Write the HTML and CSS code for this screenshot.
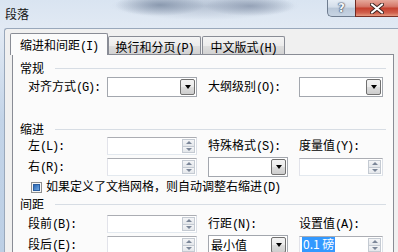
FILE: index.html
```html
<!DOCTYPE html>
<html lang="zh">
<head>
<meta charset="utf-8">
<title>段落</title>
<link rel="stylesheet" href="styles.css">
</head>
<body>
<div class="window">
  <div class="titlebar">
    <span class="title">段落</span>
    <div class="caption">
      <div class="cbtn help">?</div>
      <div class="cbtn close">
        <svg width="14" height="11" viewBox="0 0 14 11">
          <path d="M2 1.5 L12 9.5 M12 1.5 L2 9.5" stroke="#3d2420" stroke-width="4" stroke-linecap="round"/>
          <path d="M2 1.5 L12 9.5 M12 1.5 L2 9.5" stroke="#ffffff" stroke-width="2.2" stroke-linecap="round"/>
        </svg>
      </div>
    </div>
  </div>
  <div class="client">
    <div class="tabs">
      <div class="tab active">缩进和间距<span class="k">(I)</span></div>
      <div class="tab t2">换行和分页<span class="k">(P)</span></div>
      <div class="tab t3">中文版式<span class="k">(H)</span></div>
    </div>
    <div class="panel">
      <div class="heading">常规</div>
      <div class="grid g1">
        <span class="lbl">对齐方式<span class="k">(G):</span></span>
        <div class="dd"><span class="val"></span><span class="ddb"></span></div>
        <span class="lbl">大纲级别<span class="k">(O):</span></span>
        <div class="dd"><span class="val"></span><span class="ddb"></span></div>
      </div>

      <div class="heading h2">缩进</div>
      <div class="grid g2">
        <span class="lbl">左<span class="k">(L):</span></span>
        <div class="spin"><span class="val"></span><span class="sb"><i class="up"></i><i class="dn"></i></span></div>
        <span class="lbl">特殊格式<span class="k">(S):</span></span>
        <span class="lbl">度量值<span class="k">(Y):</span></span>
        <span class="lbl">右<span class="k">(R):</span></span>
        <div class="spin"><span class="val"></span><span class="sb"><i class="up"></i><i class="dn"></i></span></div>
        <div class="dd"><span class="val"></span><span class="ddb"></span></div>
        <div class="spin"><span class="val"></span><span class="sb"><i class="up"></i><i class="dn"></i></span></div>
      </div>

      <div class="check"><span class="cb"><i></i></span><span>如果定义了文档网格，则自动调整右缩进<span class="k">(D)</span></span></div>

      <div class="heading h3">间距</div>
      <div class="grid g2 g3">
        <span class="lbl">段前<span class="k">(B):</span></span>
        <div class="spin"><span class="val"></span><span class="sb"><i class="up"></i><i class="dn"></i></span></div>
        <span class="lbl">行距<span class="k">(N):</span></span>
        <span class="lbl">设置值<span class="k">(A):</span></span>
        <span class="lbl">段后<span class="k">(E):</span></span>
        <div class="spin"><span class="val"></span><span class="sb"><i class="up"></i><i class="dn"></i></span></div>
        <div class="dd"><span class="val">最小值</span><span class="ddb"></span></div>
        <div class="spin"><span class="val"><span class="sel">0.1 磅</span></span><span class="sb"><i class="up"></i><i class="dn"></i></span></div>
      </div>
    </div>
  </div>
</div>
</body>
</html>
```

FILE: styles.css
```css
html, body {
  margin: 0;
  padding: 0;
}
body {
  width: 398px;
  height: 252px;
  overflow: hidden;
  font-family: "Noto Sans CJK SC", sans-serif;
  font-size: 12px;
  line-height: 14px;
  color: #000;
  background: #f0f0f0;
}

.window {
  height: 252px;
  display: flex;
  flex-direction: column;
  background:
    radial-gradient(ellipse 45px 11px at 160px 5px, rgba(118, 134, 158, 0.75), rgba(118, 134, 158, 0) 100%),
    radial-gradient(ellipse 45px 10px at 250px 6px, rgba(128, 142, 165, 0.7), rgba(128, 142, 165, 0) 100%),
    radial-gradient(ellipse 95px 14px at 205px 6px, rgba(150, 164, 185, 0.55), rgba(150, 164, 185, 0) 100%),
    linear-gradient(to bottom, #d9e4f1, #e2eaf4 30px, #c3d4e8 120px, #bccfe5);
}

.titlebar {
  height: 28px;
  display: flex;
  align-items: flex-start;
  flex: none;
}
.title {
  margin: 7px 0 0 5px;
  color: #151515;
}
.caption {
  margin-left: auto;
  display: flex;
}
.cbtn {
  height: 17px;
  box-sizing: border-box;
  display: flex;
  align-items: center;
  justify-content: center;
}
.help {
  width: 28px;
  border: 1px solid #6e7c8f;
  border-top: 0;
  border-right: 0;
  border-radius: 0 0 0 5px;
  background: linear-gradient(to bottom, #e6edf5, #d3dde9 45%, #b9c7d8 50%, #c7d4e3);
  color: #f4f7fb;
  font-family: "DejaVu Sans", sans-serif;
  font-weight: bold;
  font-size: 12px;
  text-shadow: 0 0 1px #3a4a60, 0 0 1px #3a4a60, 0 0 2px #3a4a60;
}
.close {
  width: 43px;
  border-left: 1px solid #6e2a22;
  border-bottom: 1px solid #7a3026;
  background: linear-gradient(to bottom, #e6a89b, #d5786a 40%, #c5412f 52%, #d0604d 80%, #e59a80);
}

.client {
  flex: 1;
  margin-left: 4px;
  background: #f0f0f0;
  border-top: 1px solid #99a8bb;
  border-left: 1px solid #99a8bb;
  border-top-left-radius: 3px;
  padding: 4px 4px 0 5px;
  display: flex;
  flex-direction: column;
}

.k {
  font-family: "Liberation Mono", monospace;
  font-size: 12px;
  letter-spacing: -1.2px;
}

.tabs {
  height: 21px;
  display: flex;
  align-items: flex-end;
  flex: none;
  position: relative;
  z-index: 1;
}
.tab {
  box-sizing: border-box;
  height: 18px;
  padding-top: 3px;
  border: 1px solid #898c95;
  border-bottom: 0;
  border-radius: 2px 2px 0 0;
  background: linear-gradient(to bottom, #f4f4f4, #ececec 50%, #dfdfdf 51%, #d2d2d2);
  text-align: center;
  white-space: nowrap;
}
.tab.active {
  width: 98px;
  height: 22px;
  margin-bottom: -1px;
  padding-top: 4px;
  background: #fbfbfb;
}
.t2 {
  width: 93px;
}
.t3 {
  width: 83px;
  margin-left: 1px;
}

.panel {
  flex: 1;
  margin-left: 2px;
  border: 1px solid #898c95;
  border-bottom: 0;
  background: #fbfbfb;
  padding: 6px 7px 0 7px;
}

.heading {
  height: 14px;
  display: flex;
  align-items: center;
}
.heading::after {
  content: "";
  flex: 1;
  height: 1px;
  margin-left: 11px;
  background: #d7dde4;
}
.h2 {
  margin-top: 25px;
}
.h3 {
  margin-top: 3px;
}

.grid {
  display: grid;
  grid-template-columns: 68px 90px 80px 84px;
  column-gap: 11px;
  margin-left: 8px;
  align-items: center;
}
.g1 {
  margin-top: 2px;
  grid-template-rows: 20px;
}
.g2 {
  margin-top: 1px;
  grid-template-rows: 18px 20px;
  row-gap: 2px;
}
.g3 {
  margin-top: 4px;
}
.lbl {
  white-space: nowrap;
}

.dd {
  height: 20px;
  box-sizing: border-box;
  border: 1px solid #a3a7ae;
  background: #fff;
  display: flex;
  align-items: center;
}
.val {
  flex: 1;
  padding-left: 2px;
  white-space: nowrap;
  overflow: hidden;
}
.ddb {
  width: 15px;
  height: 16px;
  margin-right: 1px;
  box-sizing: border-box;
  border: 1px solid #707070;
  border-radius: 2px;
  background: linear-gradient(to bottom, #f3f3f3, #ebebeb 50%, #dddddd 51%, #cdcdcd);
  display: flex;
  align-items: center;
  justify-content: center;
}
.ddb::after {
  content: "";
  border-left: 3.5px solid transparent;
  border-right: 3.5px solid transparent;
  border-top: 4px solid #000;
}

.spin {
  height: 18px;
  box-sizing: border-box;
  border: 1px solid #abadb3;
  border-color: #abadb3 #dbdfe6 #e3e9ef #e2e3ea;
  background: #fff;
  display: flex;
  align-items: stretch;
}
.sb {
  width: 13px;
  margin: 1px;
  display: flex;
  flex-direction: column;
  gap: 0;
}
.sb i {
  flex: 1;
  box-sizing: border-box;
  border: 1px solid #c4cad2;
  background: linear-gradient(to bottom, #f4f5f7, #e4e7eb);
  display: flex;
  align-items: center;
  justify-content: center;
}
.sb i.dn {
  border-top: 0;
}
.sb i.up::after {
  content: "";
  border-left: 3px solid transparent;
  border-right: 3px solid transparent;
  border-bottom: 3px solid #7b8698;
}
.sb i.dn::after {
  content: "";
  border-left: 3px solid transparent;
  border-right: 3px solid transparent;
  border-top: 3px solid #7b8698;
}
.sel {
  background: #3399ff;
  color: #fff;
  padding: 0 1px;
}

.check {
  margin-top: 3px;
  height: 14px;
  padding-left: 11px;
  display: flex;
  align-items: center;
  gap: 4px;
  white-space: nowrap;
}
.cb {
  width: 11px;
  height: 11px;
  box-sizing: border-box;
  border: 1px solid #8e8f8f;
  background: #f6f6f6;
  display: flex;
  align-items: center;
  justify-content: center;
}
.cb i {
  width: 7px;
  height: 7px;
  box-sizing: border-box;
  border: 1px solid #2a5d9f;
  background: linear-gradient(135deg, #2964b0, #6ea8e4);
}
```
